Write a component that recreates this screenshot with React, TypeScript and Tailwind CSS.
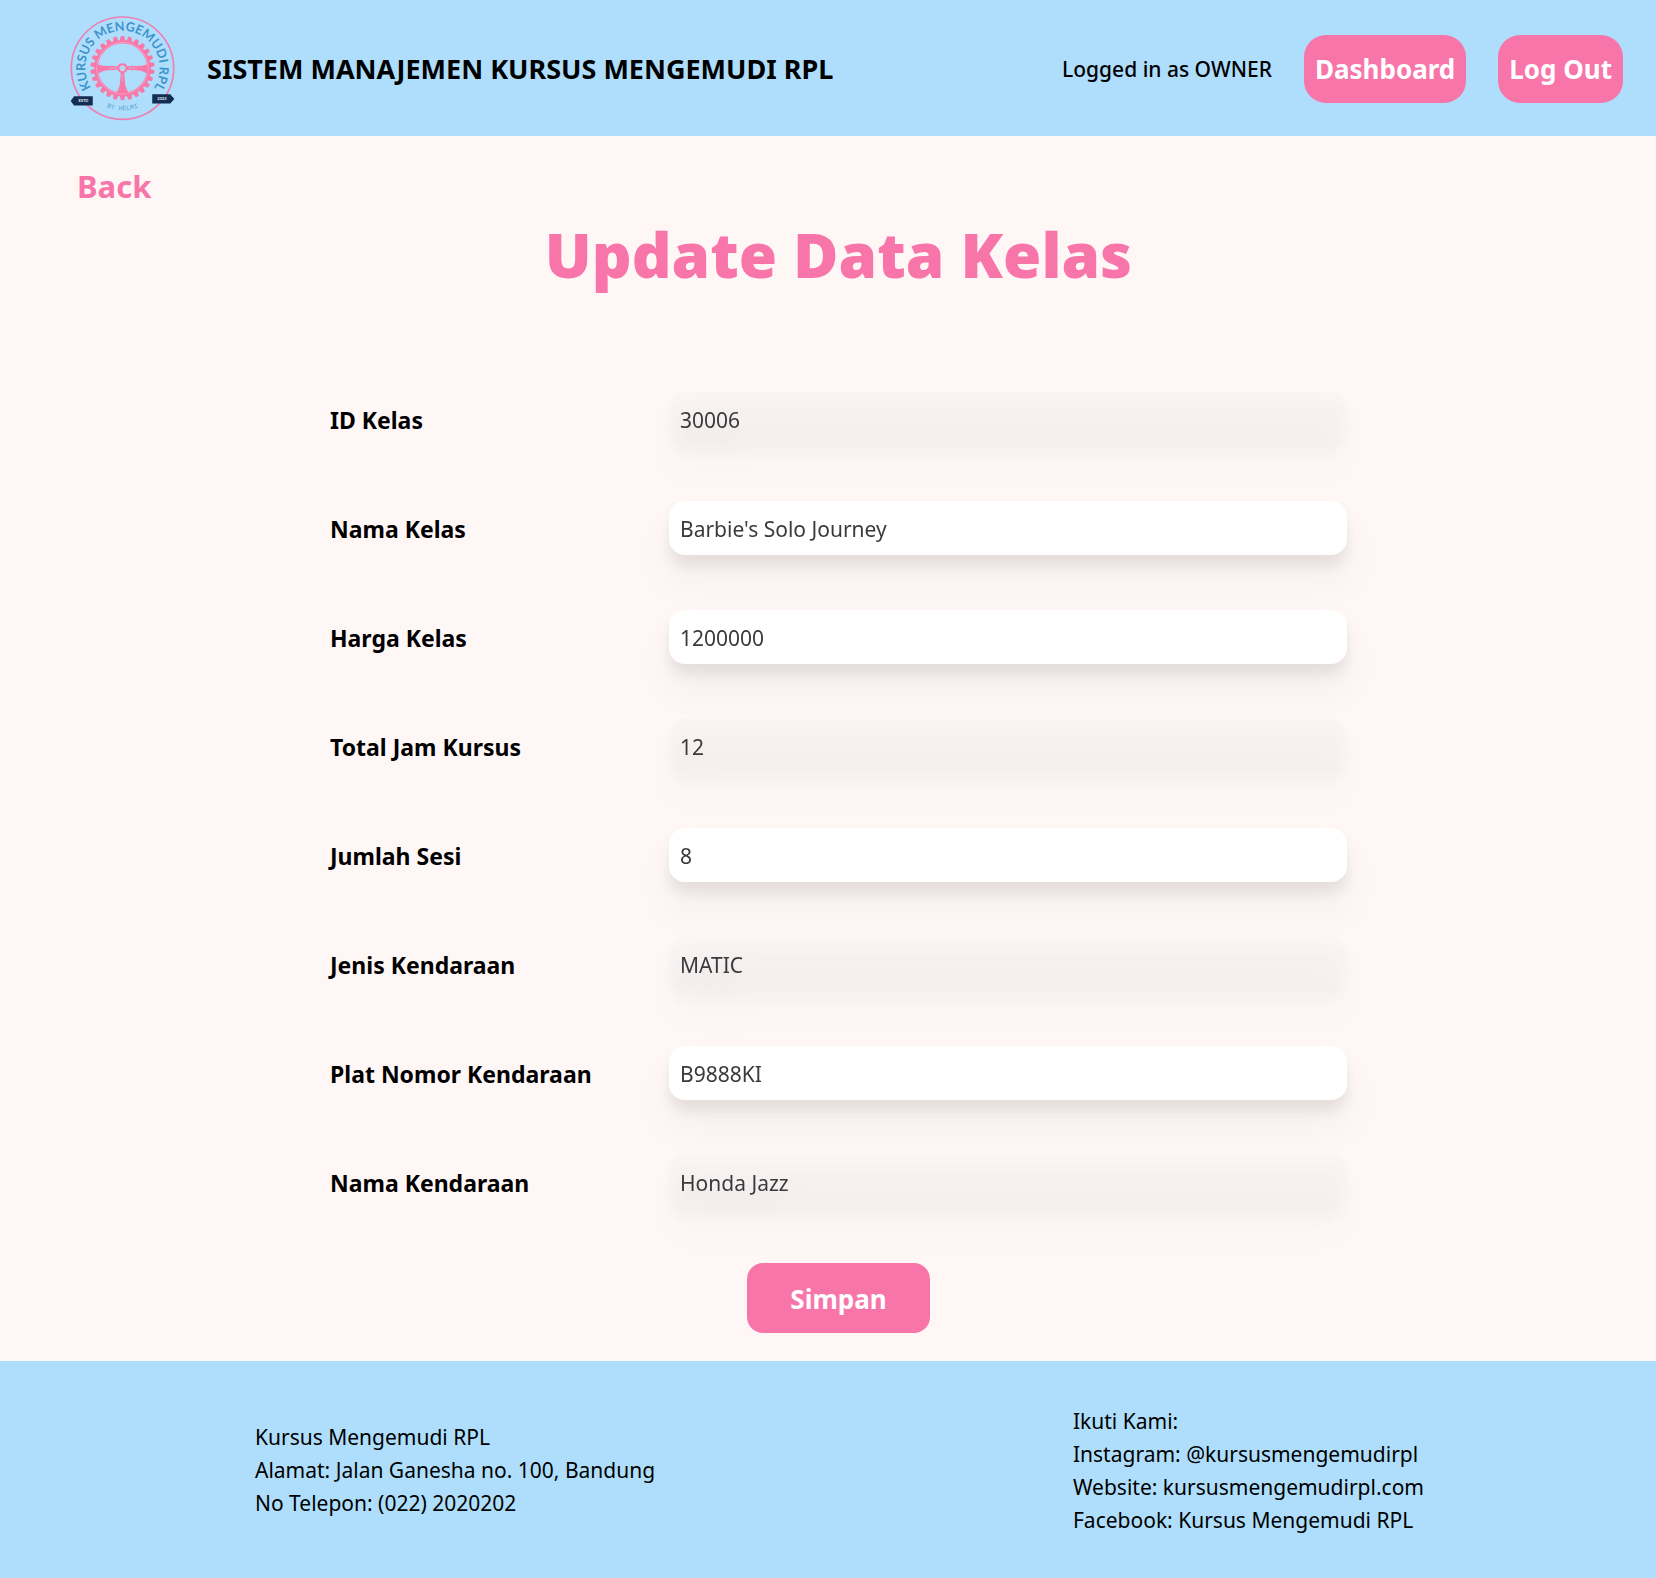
import React from "react";

type Field = { id: string; label: string; value: string; disabled?: boolean };

const fields: Field[] = [
  { id: "id-kelas", label: "ID Kelas", value: "30006", disabled: true },
  { id: "nama-kelas", label: "Nama Kelas", value: "Barbie's Solo Journey" },
  { id: "harga-kelas", label: "Harga Kelas", value: "1200000" },
  { id: "total-jam", label: "Total Jam Kursus", value: "12", disabled: true },
  { id: "jumlah-sesi", label: "Jumlah Sesi", value: "8" },
  { id: "jenis-kendaraan", label: "Jenis Kendaraan", value: "MATIC", disabled: true },
  { id: "plat-nomor", label: "Plat Nomor Kendaraan", value: "B9888KI" },
  { id: "nama-kendaraan", label: "Nama Kendaraan", value: "Honda Jazz", disabled: true },
];

const teeth = Array.from({ length: 26 }, (_, i) => (i * 360) / 26);

function Logo() {
  return (
    <svg viewBox="28 32 320 320" className="size-[107px] shrink-0" role="img" aria-label="Kursus Mengemudi RPL">
      <defs>
        <path id="arc-top" d="M 101 256 A 111 111 0 1 1 275 256" />
        <path id="arc-bottom" d="M 62 188 A 126 126 0 0 0 314 188" />
      </defs>
      <circle cx="188" cy="188" r="153" fill="none" stroke="#ee7fb2" strokeWidth="5" />
      <g fill="#f879a9">
        {teeth.map((angle) => (
          <path key={angle} d="M180 106 L183 92 H193 L196 106 Z" transform={`rotate(${angle} 188 188)`} />
        ))}
      </g>
      <circle cx="188" cy="188" r="79" fill="none" stroke="#f879a9" strokeWidth="11" />
      <circle cx="188" cy="188" r="77" fill="none" stroke="#f7b3d2" strokeWidth="2" />
      <g fill="#f879a9">
        <path d="M113 176 Q136 184 158 181 L177 183 V193 L158 194 Q136 192 114 204 Z" />
        <path d="M263 176 Q240 184 218 181 L199 183 V193 L218 194 Q240 192 262 204 Z" />
        <path d="M183 198 H193 L195 226 Q196 250 208 263 H168 Q180 250 181 226 Z" />
        <circle cx="188" cy="188" r="15" />
      </g>
      <circle cx="188" cy="188" r="9" fill="#b9d7f3" />
      <g fill="none" stroke="#d3b2d8" strokeWidth="2">
        <circle cx="166" cy="188" r="3" />
        <circle cx="155" cy="188" r="3" />
        <circle cx="210" cy="188" r="3" />
        <circle cx="221" cy="188" r="3" />
        <circle cx="188" cy="211" r="3" />
        <circle cx="188" cy="222" r="3" />
      </g>
      <text fill="#3f93cc" fontFamily="Lato, sans-serif" fontWeight="700" fontSize="38" textAnchor="middle">
        <textPath href="#arc-top" startOffset="50%">KURSUS MENGEMUDI RPL</textPath>
      </text>
      <text fill="#5ba3d3" fontFamily="Liberation Mono, monospace" fontSize="20" textAnchor="middle">
        <textPath href="#arc-bottom" startOffset="50%">BY HELMI</textPath>
      </text>
      <path d="M33 286 L43 272 H99 V300 H43 Z" fill="#142d52" />
      <path d="M343 280 L331 266 H277 V294 H331 Z" fill="#142d52" />
      <g fill="#e4edf7" fontFamily="Lato, sans-serif" fontWeight="700" fontSize="12" textAnchor="middle">
        <text x="71" y="290">ESTD</text>
        <text x="306" y="284">2023</text>
      </g>
    </svg>
  );
}

export default function App() {
  return (
    <div className="flex min-h-screen flex-col bg-[#fff6f6] font-['Noto_Sans',sans-serif] text-black">
      <header className="flex h-[136px] items-center justify-between bg-[#aedefc] pt-[2px] pr-[33px] pl-[69px]">
        <div className="flex items-center gap-[31px]">
          <Logo />
          <p className="text-[27px] leading-9 font-bold">SISTEM MANAJEMEN KURSUS MENGEMUDI RPL</p>
        </div>
        <nav className="flex items-center gap-8">
          <p className="text-[21px] leading-8 font-medium">Logged in as OWNER</p>
          <button type="button" className="h-[68px] rounded-[22px] bg-[#f875aa] px-[11px] text-[26px] font-bold text-white">
            Dashboard
          </button>
          <button type="button" className="h-[68px] rounded-[22px] bg-[#f875aa] px-[11px] text-[26px] font-bold text-white">
            Log Out
          </button>
        </nav>
      </header>

      <main className="flex flex-1 flex-col pb-[25px]">
        <a href="#" className="mt-[30px] ml-[77px] self-start text-[31px] leading-10 font-bold text-[#f875aa]">
          Back
        </a>
        <form className="flex flex-col items-center pl-[21px]" onSubmit={(e) => e.preventDefault()}>
          <h1 className="mt-2 text-[62px] leading-[80px] font-black text-[#f875aa]">Update Data Kelas</h1>
          <div className="mt-[98px] flex w-full max-w-[1017px] flex-col gap-[55px]">
            {fields.map((f) => (
              <div key={f.id} className="grid grid-cols-3 items-center">
                <label htmlFor={f.id} className="pt-px text-[23px] leading-8 font-bold whitespace-nowrap">
                  {f.label}
                </label>
                <input
                  id={f.id}
                  type="text"
                  defaultValue={f.value}
                  disabled={f.disabled}
                  className="col-span-2 h-[54px] rounded-2xl bg-white px-[11px] pt-[2px] text-[21px] text-[#3a3a3a] [filter:drop-shadow(0_27px_18px_rgb(0_0_0/0.03))_drop-shadow(0_11px_7px_rgb(0_0_0/0.08))] disabled:bg-[#efefef]/30"
                />
              </div>
            ))}
          </div>
          <button type="submit" className="mt-[54px] h-[70px] rounded-2xl bg-[#f875aa] px-[43px] pt-[2px] text-[26px] font-bold text-white">
            Simpan
          </button>
        </form>
      </main>

      <footer className="flex h-[217px] items-center justify-between bg-[#aedefc] pt-[2px] pr-[232px] pl-[255px] text-[21px] leading-[33px]">
        <address className="not-italic">
          <p>Kursus Mengemudi RPL</p>
          <p>Alamat: Jalan Ganesha no. 100, Bandung</p>
          <p>No Telepon: (022) 2020202</p>
        </address>
        <div>
          <p>Ikuti Kami:</p>
          <p>Instagram: @kursusmengemudirpl</p>
          <p>Website: kursusmengemudirpl.com</p>
          <p>Facebook: Kursus Mengemudi RPL</p>
        </div>
      </footer>
    </div>
  );
}
